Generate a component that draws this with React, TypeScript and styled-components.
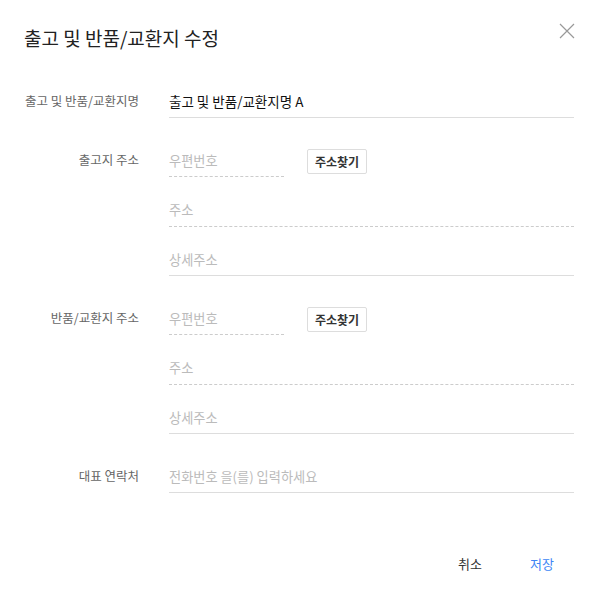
import React from "react";
import styled, { createGlobalStyle } from "styled-components";

const GlobalStyle = createGlobalStyle`
  body {
    margin: 0;
    background: #fff;
    font-family: "Noto Sans CJK KR", "Noto Sans", sans-serif;
  }
  * { box-sizing: border-box; }
`;

interface FieldProps {
  $dashed?: boolean;
  $width?: string;
}

export default function App() {
  return (
    <>
      <GlobalStyle />
      <Modal>
        <Header>
          <Title>출고 및 반품/교환지 수정</Title>
          <CloseButton aria-label="닫기">
            <svg width="16" height="16" viewBox="0 0 16 16">
              <path d="M1 1L15 15M15 1L1 15" stroke="#999" strokeWidth="1.2" fill="none" />
            </svg>
          </CloseButton>
        </Header>

        <Form>
          <Label>출고 및 반품/교환지명</Label>
          <Fields>
            <Input defaultValue="출고 및 반품/교환지명 A" />
          </Fields>

          <Label>출고지 주소</Label>
          <Fields>
            <PostRow>
              <Input $dashed $width="115px" placeholder="우편번호" />
              <SearchButton>주소찾기</SearchButton>
            </PostRow>
            <Input $dashed placeholder="주소" />
            <Input placeholder="상세주소" />
          </Fields>

          <Label>반품/교환지 주소</Label>
          <Fields>
            <PostRow>
              <Input $dashed $width="115px" placeholder="우편번호" />
              <SearchButton>주소찾기</SearchButton>
            </PostRow>
            <Input $dashed placeholder="주소" />
            <Input placeholder="상세주소" />
          </Fields>

          <Label>대표 연락처</Label>
          <Fields>
            <Input placeholder="전화번호 을(를) 입력하세요" />
          </Fields>
        </Form>

        <Footer>
          <TextButton>취소</TextButton>
          <TextButton $primary>저장</TextButton>
        </Footer>
      </Modal>
    </>
  );
}

const Modal = styled.div`
  width: 598px;
  height: 595px;
  padding: 0 24px;
`;

const Header = styled.div`
  position: relative;
  padding-top: 25px;
`;

const Title = styled.h2`
  margin: 0;
  font-size: 19px;
  line-height: 26px;
  font-weight: 400;
  color: #222;
`;

const CloseButton = styled.button`
  position: absolute;
  top: 23px;
  right: -1px;
  padding: 0;
  border: 0;
  background: none;
  cursor: pointer;
  line-height: 0;
`;

const Form = styled.div`
  margin-top: 33px;
  display: grid;
  grid-template-columns: 115px 1fr;
  column-gap: 30px;
  row-gap: 25px;
`;

const Label = styled.label`
  height: 33px;
  display: flex;
  align-items: center;
  justify-content: flex-end;
  font-size: 12.5px;
  color: #666;
  white-space: nowrap;
`;

const Fields = styled.div`
  display: flex;
  flex-direction: column;
  gap: 15.5px;
`;

const PostRow = styled.div`
  display: flex;
  align-items: center;
  gap: 23px;
`;

const Input = styled.input<FieldProps>`
  width: ${(p) => p.$width ?? "100%"};
  height: 34px;
  padding: 0;
  border: 0;
  border-bottom: 1px ${(p) => (p.$dashed ? "dashed #ccc" : "solid #ddd")};
  outline: none;
  font-family: inherit;
  font-size: 13.5px;
  color: #111;
  background: transparent;

  &::placeholder {
    font-size: 13.2px;
    color: #bbb;
  }
`;

const SearchButton = styled.button`
  width: 60px;
  height: 25px;
  margin-top: 2px;
  padding: 0;
  border: 1px solid #ddd;
  border-radius: 2px;
  background: #fff;
  font-family: inherit;
  font-size: 12px;
  font-weight: 700;
  color: #333;
  cursor: pointer;
`;

const Footer = styled.div`
  margin-top: 52px;
  display: flex;
  justify-content: flex-end;
  gap: 8px;
`;

const TextButton = styled.button<{ $primary?: boolean }>`
  width: 64px;
  height: 36px;
  padding: 0;
  border: 0;
  background: none;
  font-family: inherit;
  font-size: 13px;
  color: ${(p) => (p.$primary ? "#3d85f5" : "#333")};
  cursor: pointer;
`;
